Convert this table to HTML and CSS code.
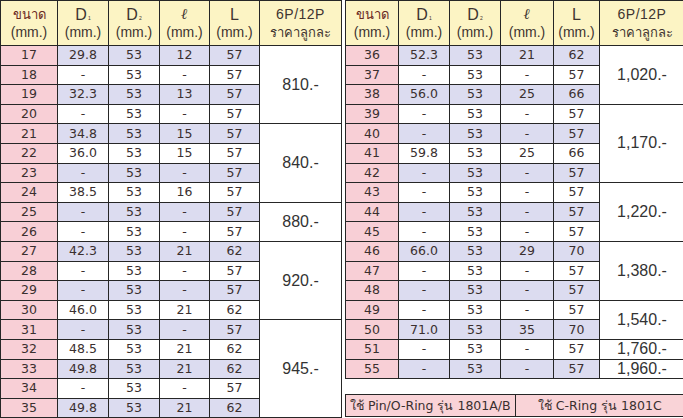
FILE: index.html
```html
<!DOCTYPE html>
<html lang="th">
<head>
<meta charset="utf-8">
<title>ราคา</title>
<link rel="stylesheet" href="styles.css">
</head>
<body>
<div class="page">
  <table class="tbl left">
    <colgroup><col class="c1"><col class="c2"><col class="c3"><col class="c4"><col class="c5"><col class="c6"></colgroup>
    <thead>
      <tr>
        <th><span class="th-size">ขนาด</span><br><span class="mm">(mm.)</span></th>
        <th><span class="big">D</span><sub>1</sub><br><span class="mm">(mm.)</span></th>
        <th><span class="big">D</span><sub>2</sub><br><span class="mm">(mm.)</span></th>
        <th><span class="ell">ℓ</span><br><span class="mm">(mm.)</span></th>
        <th><span class="big">L</span><br><span class="mm">(mm.)</span></th>
        <th class="pth"><span class="pp">6P/12P</span><br><span class="pr">ราคาลูกละ</span></th>
      </tr>
    </thead>
    <tbody>
      <tr class="alt"><td class="sz">17</td><td>29.8</td><td>53</td><td>12</td><td>57</td><td class="price" rowspan="4">810.-</td></tr>
      <tr><td class="sz">18</td><td>-</td><td>53</td><td>-</td><td>57</td></tr>
      <tr class="alt"><td class="sz">19</td><td>32.3</td><td>53</td><td>13</td><td>57</td></tr>
      <tr><td class="sz">20</td><td>-</td><td>53</td><td>-</td><td>57</td></tr>
      <tr class="alt"><td class="sz">21</td><td>34.8</td><td>53</td><td>15</td><td>57</td><td class="price" rowspan="4">840.-</td></tr>
      <tr><td class="sz">22</td><td>36.0</td><td>53</td><td>15</td><td>57</td></tr>
      <tr class="alt"><td class="sz">23</td><td>-</td><td>53</td><td>-</td><td>57</td></tr>
      <tr><td class="sz">24</td><td>38.5</td><td>53</td><td>16</td><td>57</td></tr>
      <tr class="alt"><td class="sz">25</td><td>-</td><td>53</td><td>-</td><td>57</td><td class="price" rowspan="2">880.-</td></tr>
      <tr><td class="sz">26</td><td>-</td><td>53</td><td>-</td><td>57</td></tr>
      <tr class="alt"><td class="sz">27</td><td>42.3</td><td>53</td><td>21</td><td>62</td><td class="price" rowspan="4">920.-</td></tr>
      <tr><td class="sz">28</td><td>-</td><td>53</td><td>-</td><td>57</td></tr>
      <tr class="alt"><td class="sz">29</td><td>-</td><td>53</td><td>-</td><td>57</td></tr>
      <tr><td class="sz">30</td><td>46.0</td><td>53</td><td>21</td><td>62</td></tr>
      <tr class="alt"><td class="sz">31</td><td>-</td><td>53</td><td>-</td><td>57</td><td class="price" rowspan="5">945.-</td></tr>
      <tr><td class="sz">32</td><td>48.5</td><td>53</td><td>21</td><td>62</td></tr>
      <tr class="alt"><td class="sz">33</td><td>49.8</td><td>53</td><td>21</td><td>62</td></tr>
      <tr><td class="sz">34</td><td>-</td><td>53</td><td>-</td><td>57</td></tr>
      <tr class="alt"><td class="sz">35</td><td>49.8</td><td>53</td><td>21</td><td>62</td></tr>
    </tbody>
  </table>

  <div class="rightcol">
    <table class="tbl right">
      <colgroup><col class="r1"><col class="r2"><col class="r3"><col class="r4"><col class="r5"><col class="r6"></colgroup>
      <thead>
        <tr>
          <th><span class="th-size">ขนาด</span><br><span class="mm">(mm.)</span></th>
          <th><span class="big">D</span><sub>1</sub><br><span class="mm">(mm.)</span></th>
          <th><span class="big">D</span><sub>2</sub><br><span class="mm">(mm.)</span></th>
          <th><span class="ell">ℓ</span><br><span class="mm">(mm.)</span></th>
          <th><span class="big">L</span><br><span class="mm">(mm.)</span></th>
          <th class="pth"><span class="pp">6P/12P</span><br><span class="pr">ราคาลูกละ</span></th>
        </tr>
      </thead>
      <tbody>
        <tr class="alt"><td class="sz">36</td><td>52.3</td><td>53</td><td>21</td><td>62</td><td class="price" rowspan="3">1,020.-</td></tr>
        <tr><td class="sz">37</td><td>-</td><td>53</td><td>-</td><td>57</td></tr>
        <tr class="alt"><td class="sz">38</td><td>56.0</td><td>53</td><td>25</td><td>66</td></tr>
        <tr><td class="sz">39</td><td>-</td><td>53</td><td>-</td><td>57</td><td class="price" rowspan="4">1,170.-</td></tr>
        <tr class="alt"><td class="sz">40</td><td>-</td><td>53</td><td>-</td><td>57</td></tr>
        <tr><td class="sz">41</td><td>59.8</td><td>53</td><td>25</td><td>66</td></tr>
        <tr class="alt"><td class="sz">42</td><td>-</td><td>53</td><td>-</td><td>57</td></tr>
        <tr><td class="sz">43</td><td>-</td><td>53</td><td>-</td><td>57</td><td class="price" rowspan="3">1,220.-</td></tr>
        <tr class="alt"><td class="sz">44</td><td>-</td><td>53</td><td>-</td><td>57</td></tr>
        <tr><td class="sz">45</td><td>-</td><td>53</td><td>-</td><td>57</td></tr>
        <tr class="alt"><td class="sz">46</td><td>66.0</td><td>53</td><td>29</td><td>70</td><td class="price" rowspan="3">1,380.-</td></tr>
        <tr><td class="sz">47</td><td>-</td><td>53</td><td>-</td><td>57</td></tr>
        <tr class="alt"><td class="sz">48</td><td>-</td><td>53</td><td>-</td><td>57</td></tr>
        <tr><td class="sz">49</td><td>-</td><td>53</td><td>-</td><td>57</td><td class="price" rowspan="2">1,540.-</td></tr>
        <tr class="alt"><td class="sz">50</td><td>71.0</td><td>53</td><td>35</td><td>70</td></tr>
        <tr><td class="sz">51</td><td>-</td><td>53</td><td>-</td><td>57</td><td class="price">1,760.-</td></tr>
        <tr class="alt"><td class="sz">55</td><td>-</td><td>53</td><td>-</td><td>57</td><td class="price">1,960.-</td></tr>
      </tbody>
    </table>

    <div class="legend">
      <div class="leg">ใช้ Pin/O-Ring รุ่น 1801A/B</div>
      <div class="leg">ใช้ C-Ring รุ่น 1801C</div>
    </div>
  </div>
</div>
</body>
</html>
```

FILE: styles.css
```css
html, body {
  margin: 0;
  padding: 0;
  background: #ffffff;
}
body {
  font-family: "DejaVu Sans", "Noto Sans", sans-serif;
  color: #3a2f2f;
}
.page {
  display: flex;
  gap: 3px;
  width: 683px;
  height: 418px;
  overflow: hidden;
}
.tbl {
  border-collapse: collapse;
  table-layout: fixed;
  border: 1px solid #262626;
}
.left { width: 341px; }
.right { width: 339px; }
.c1 { width: 57px; }
.c2 { width: 51px; }
.c3 { width: 51px; }
.c4 { width: 50px; }
.c5 { width: 50px; }
.c6 { width: 82px; }
.r1 { width: 53px; }
.r2 { width: 51px; }
.r3 { width: 51px; }
.r4 { width: 53px; }
.r5 { width: 46px; }
.r6 { width: 85px; }

.tbl th {
  background: #fcf4c4;
  border: 1px solid #262626;
  height: 44px;
  padding: 0;
  font-family: "Liberation Sans", Arial, sans-serif;
  font-weight: normal;
  color: #3f3531;
  line-height: 17px;
  text-align: center;
  vertical-align: middle;
}
.th-size {
  font-family: "DejaVu Sans", sans-serif;
  font-size: 13px;
  color: #6b2a1f;
}
.mm { font-size: 14px; }
.big { font-size: 16px; }
.tbl th sub {
  font-size: 5px;
  vertical-align: baseline;
  line-height: 0;
  margin-left: 1px;
}
.ell {
  font-family: "DejaVu Serif", serif;
  font-style: italic;
  font-weight: bold;
  font-size: 15px;
}
.pth { color: #4a4a4a; }
.pp { font-size: 14px; letter-spacing: 0.5px; }
.pr { font-size: 13px; font-family: "DejaVu Sans", sans-serif; }

.tbl td {
  border: 1px solid #262626;
  height: 18.6px;
  padding: 0;
  text-align: center;
  vertical-align: middle;
  font-size: 12.5px;
  line-height: 14px;
  color: #3a2f2f;
  background: #ffffff;
}
.tbl tr.alt td { background: #dcdcf0; }
.tbl td.sz, .tbl tr.alt td.sz { background: #f8cfd6; }
.tbl td.price, .tbl tr.alt td.price {
  background: #ffffff;
  font-family: "Liberation Sans", Arial, sans-serif;
  font-size: 16px;
  color: #333333;
}

.rightcol {
  display: flex;
  flex-direction: column;
  gap: 15px;
}
.legend {
  display: flex;
  border: 1px solid #262626;
  height: 21px;
  background: #f9d3d7;
}
.leg {
  flex: 1;
  display: flex;
  align-items: center;
  justify-content: center;
  font-size: 12.5px;
  color: #3a2f2f;
}
.leg + .leg { border-left: 1px solid #262626; }
```
